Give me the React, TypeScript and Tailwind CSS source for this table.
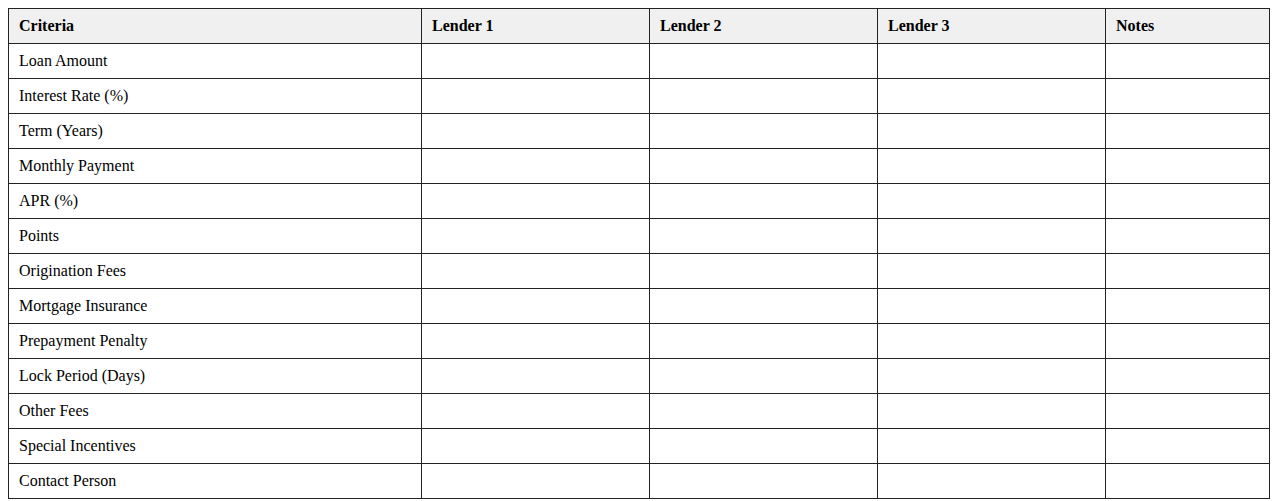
const rows = [
  'Loan Amount',
  'Interest Rate (%)',
  'Term (Years)',
  'Monthly Payment',
  'APR (%)',
  'Points',
  'Origination Fees',
  'Mortgage Insurance',
  'Prepayment Penalty',
  'Lock Period (Days)',
  'Other Fees',
  'Special Incentives',
  'Contact Person',
];

const headers = ['Criteria', 'Lender 1', 'Lender 2', 'Lender 3', 'Notes'];

export default function App() {
  return (
    <div className="p-2 bg-white" style={{ fontFamily: '"Liberation Serif", "Times New Roman", serif' }}>
      <table className="w-full border-collapse text-[16px] leading-[18px] text-black table-fixed">
        <colgroup>
          <col className="w-[413px]" />
          <col className="w-[228px]" />
          <col className="w-[228px]" />
          <col className="w-[228px]" />
          <col />
        </colgroup>
        <thead>
          <tr className="bg-[#f0f0f0]">
            {headers.map((h) => (
              <th key={h} className="border border-[#222] px-2.5 py-2 text-left font-bold">
                {h}
              </th>
            ))}
          </tr>
        </thead>
        <tbody>
          {rows.map((r) => (
            <tr key={r}>
              <td className="border border-[#222] px-2.5 py-2">{r}</td>
              <td className="border border-[#222] px-2.5 py-2"></td>
              <td className="border border-[#222] px-2.5 py-2"></td>
              <td className="border border-[#222] px-2.5 py-2"></td>
              <td className="border border-[#222] px-2.5 py-2"></td>
            </tr>
          ))}
        </tbody>
      </table>
    </div>
  );
}
